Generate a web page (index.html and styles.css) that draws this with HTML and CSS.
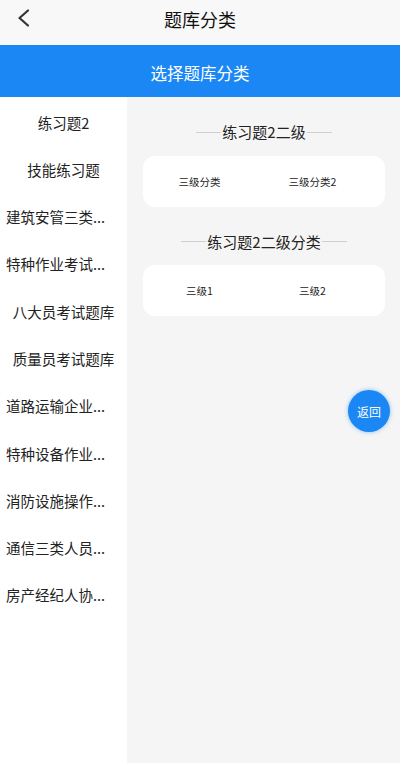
FILE: index.html
```html
<!DOCTYPE html>
<html lang="zh-CN">
<head>
  <meta charset="UTF-8" />
  <meta name="viewport" content="width=device-width, initial-scale=1.0" />
  <title>题库分类</title>
  <link rel="stylesheet" href="styles.css">
</head>
<body>
  <header class="topbar">
    <a href="#" class="back">
      <svg width="14" height="20" viewBox="0 0 14 20">
        <path d="M11 2.5 L2.5 10 L11 17.5" fill="none" stroke="#333" stroke-width="2.2" stroke-linecap="round" stroke-linejoin="round" />
      </svg>
    </a>
    <div class="title">题库分类</div>
  </header>

  <div class="banner">选择题库分类</div>

  <div class="main">
    <!-- 左侧一级分类 -->
    <ul class="side">
      <li>练习题2</li>
      <li>技能练习题</li>
      <li class="cut">建筑安管三类...</li>
      <li class="cut">特种作业考试...</li>
      <li>八大员考试题库</li>
      <li>质量员考试题库</li>
      <li class="cut">道路运输企业...</li>
      <li class="cut">特种设备作业...</li>
      <li class="cut">消防设施操作...</li>
      <li class="cut">通信三类人员...</li>
      <li class="cut">房产经纪人协...</li>
    </ul>

    <!-- 右侧二级、三级分类 -->
    <div class="content">
      <div class="group">
        <div class="group-title"><span>练习题2二级</span></div>
        <div class="card">
          <div class="item">三级分类</div>
          <div class="item">三级分类2</div>
        </div>
      </div>
      <div class="group">
        <div class="group-title"><span>练习题2二级分类</span></div>
        <div class="card">
          <div class="item">三级1</div>
          <div class="item">三级2</div>
        </div>
      </div>
    </div>
  </div>

  <button class="back-btn">返回</button>
</body>
</html>
```

FILE: styles.css
```css
* {
  box-sizing: border-box;
}
body {
  margin: 0;
  font-family: "Noto Sans CJK SC", "Noto Sans", sans-serif;
  color: #222;
  background-color: #f5f5f5;
  height: 763px;
  display: flex;
  flex-direction: column;
  overflow: hidden;
}
.topbar {
  height: 45px;
  background-color: #f8f8f8;
  position: relative;
  flex-shrink: 0;
}
.topbar .title {
  text-align: center;
  font-size: 18px;
  line-height: 39px;
  color: #111;
}
.back {
  position: absolute;
  left: 17px;
  top: 8px;
}
.back svg {
  display: block;
}
.banner {
  height: 52px;
  background-color: #1a87f5;
  color: white;
  font-size: 16.5px;
  text-align: center;
  line-height: 56px;
  flex-shrink: 0;
}
.main {
  flex: 1;
  display: flex;
}
.side {
  list-style: none;
  margin: 0;
  padding: 1.5px 0 0;
  width: 127px;
  background-color: white;
}
.side li {
  height: 47.3px;
  line-height: 47.3px;
  font-size: 14.5px;
  text-align: center;
  white-space: nowrap;
}
.side li.cut {
  text-align: left;
  padding-left: 6px;
}
.content {
  flex: 1;
  padding: 0 15px 0 16px;
}
.group-title {
  display: flex;
  justify-content: center;
  align-items: center;
  padding-top: 25px;
  margin-bottom: 13.5px;
  font-size: 15px;
  line-height: 20px;
  color: #222;
}
.group-title::before,
.group-title::after {
  content: "";
  width: 25px;
  height: 1px;
  background-color: #d0d0d0;
}
.group-title span {
  padding: 0 1px;
}
.card {
  height: 51px;
  background-color: white;
  border-radius: 12px;
  display: grid;
  grid-template-columns: 113px 113px;
  align-items: center;
}
.item {
  text-align: center;
  font-size: 10.5px;
  color: #222;
}
.back-btn {
  position: absolute;
  left: 348px;
  top: 390px;
  width: 42px;
  height: 42px;
  border: none;
  border-radius: 50%;
  background-color: #1a87f5;
  color: white;
  font-family: "Noto Sans CJK SC", sans-serif;
  font-size: 12px;
  padding: 0;
  box-shadow: 0 0 4px rgba(26, 135, 245, 0.5);
}
```
